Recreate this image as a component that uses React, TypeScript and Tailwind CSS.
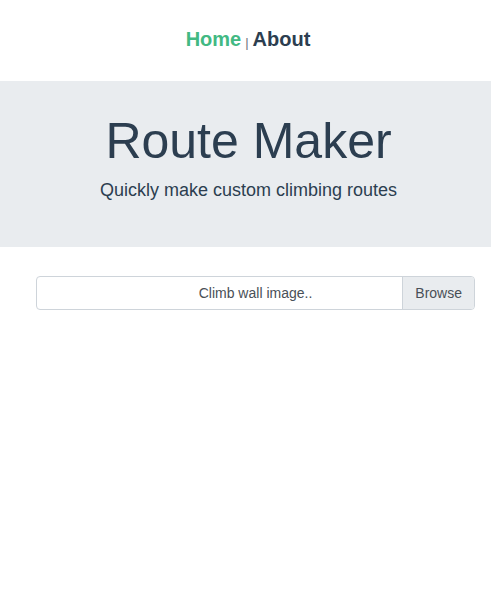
export default function App() {
  return (
    <div className="min-h-screen bg-white font-['Liberation_Sans',Arial,sans-serif] text-[#2c3e50]">
      <nav className="flex h-[81px] items-center justify-center pb-[3px] pl-[5px]">
        <a className="text-[20px] font-bold leading-none text-[#42b983]">Home</a>
        <span className="mx-[4px] mt-[6px] text-[13px] leading-none text-[#6c757d]">|</span>
        <a className="text-[20px] font-bold leading-none text-[#2c3e50]">About</a>
      </nav>

      <header className="flex h-[166px] flex-col items-center bg-[#e9ecef] pl-[6px] pt-[30px]">
        <h1 className="text-[50px] leading-[60px] font-normal">Route Maker</h1>
        <p className="mt-[7px] text-[18px] leading-[24px] text-[#2c3e50]">
          Quickly make custom climbing routes
        </p>
      </header>

      <div className="ml-[36px] mr-[16px] mt-[29px]">
        <label className="relative flex h-[34px] items-stretch rounded-[4px] border border-[#ced4da] bg-white text-[14px] text-[#495057]">
          <span className="absolute inset-0 flex items-center justify-center">Climb wall image..</span>
          <span className="flex-1" />
          <span className="relative flex items-center rounded-r-[3px] border-l border-[#ced4da] bg-[#e9ecef] px-[12px]">
            Browse
          </span>
        </label>
      </div>
    </div>
  );
}
